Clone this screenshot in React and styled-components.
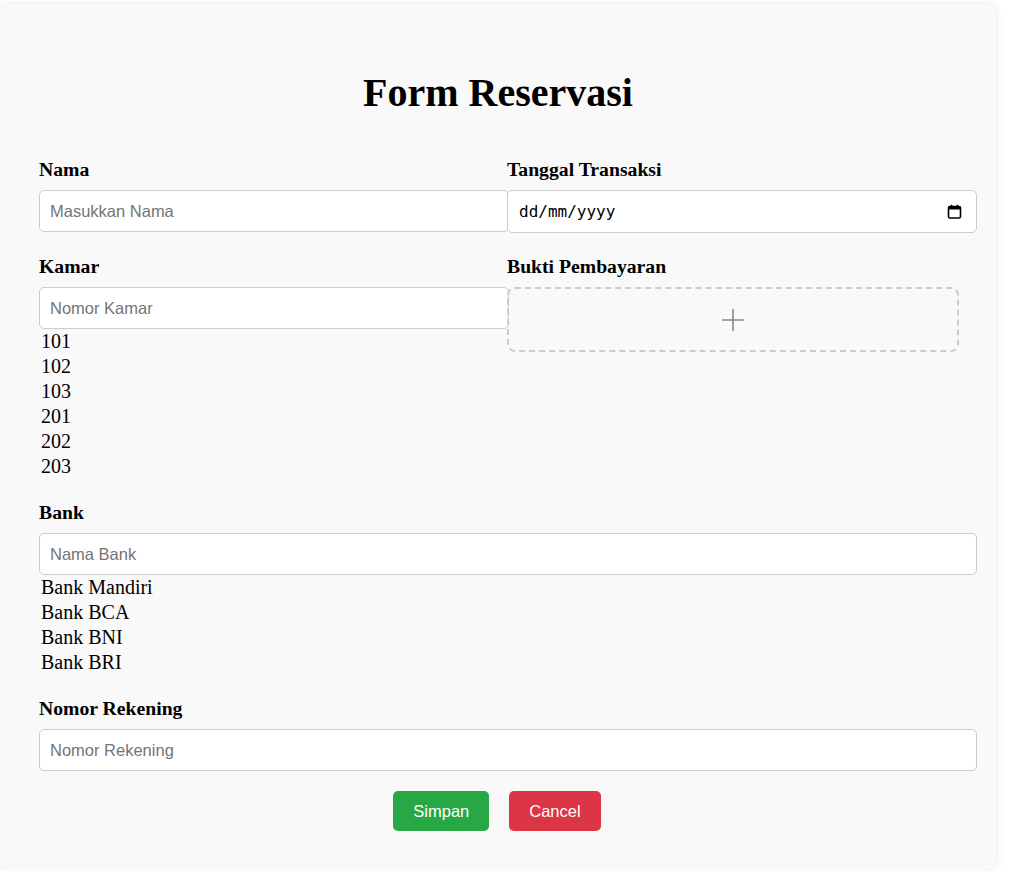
import React from "react";
import styled, { createGlobalStyle } from "styled-components";

const GlobalStyle = createGlobalStyle`
  body {
    margin: 0;
    background: #ffffff;
    font-family: "Liberation Serif", "Times New Roman", serif;
    color: #000;
  }
  * {
    box-sizing: border-box;
  }
`;

const Card = styled.div`
  width: 996px;
  margin-top: 4px;
  padding: 20px;
  background-color: #f9f9f9;
  border-radius: 10px;
  box-shadow: 0 0 10px rgba(0, 0, 0, 0.1);
`;

const Title = styled.h1`
  margin: 47px 0 43px;
  font-size: 40px;
  line-height: 44px;
  font-weight: bold;
  text-align: center;
`;

const Form = styled.form`
  width: 938px;
  margin-left: 19px;
  display: flex;
  flex-direction: column;
  gap: 22px;
`;

const TwoCols = styled.div`
  display: grid;
  grid-template-columns: 469px 469px;
  row-gap: 22px;
  align-items: start;
`;

const Group = styled.div`
  display: flex;
  flex-direction: column;
  margin-left: ${(p) => (p.$right ? "-1px" : "0")};
`;

const Label = styled.label`
  display: block;
  font-size: 19.7px;
  line-height: 22px;
  font-weight: bold;
  margin-bottom: 10px;
`;

const Input = styled.input`
  width: ${(p) => (p.$wide ? "100%" : "470px")};
  height: 42px;
  padding: 0 10px;
  border: 1px solid #ccc;
  border-radius: 5px;
  background: #fff;
  font-family: "Liberation Sans", Arial, sans-serif;
  font-size: 16.5px;
  color: #000;
  outline: none;

  &::placeholder {
    color: #757575;
  }
`;

const DateBox = styled.div`
  width: 470px;
  height: 43px;
  padding: 0 14px 0 11px;
  border: 1px solid #ccc;
  border-radius: 5px;
  background: #fff;
  display: flex;
  align-items: center;
`;

const DateText = styled.input`
  flex: 1;
  min-width: 0;
  border: none;
  outline: none;
  background: transparent;
  padding: 0;
  font-family: "DejaVu Sans Mono", monospace;
  font-size: 16px;
  color: #000;

  &::placeholder {
    color: #000;
  }
`;

const OptionList = styled.div`
  display: flex;
  flex-direction: column;
`;

const Option = styled.div`
  padding: 0 2px 1px;
  font-size: 20px;
  line-height: 24px;
  white-space: nowrap;
`;

const DropZone = styled.div`
  width: 452px;
  height: 65px;
  border: 2px dashed #ccc;
  border-radius: 8px;
  display: flex;
  align-items: center;
  justify-content: center;
  cursor: pointer;
`;

const Buttons = styled.div`
  display: flex;
  justify-content: center;
  gap: 20px;
  margin: 20px 0 20px -2px;
`;

const Button = styled.button`
  height: 40px;
  padding: 0 20px;
  border: none;
  border-radius: 5px;
  background-color: ${(p) => (p.$variant === "cancel" ? "#dc3545" : "#28a745")};
  color: #fff;
  font-family: "Liberation Sans", Arial, sans-serif;
  font-size: 16.5px;
  cursor: pointer;
`;

const PlusIcon = () => (
  <svg width="22" height="22" viewBox="0 0 22 22">
    <path d="M11 0 V22 M0 11 H22" stroke="#888" strokeWidth="1.6" fill="none" />
  </svg>
);

const CalendarIcon = () => (
  <svg width="15" height="15" viewBox="0 0 15 15">
    <rect x="1.5" y="2.5" width="12" height="11.5" rx="1.5" fill="none" stroke="#000" strokeWidth="1.6" />
    <rect x="1.5" y="2.5" width="12" height="3" fill="#000" />
    <path d="M4.5 0.8 V3 M10.5 0.8 V3" stroke="#000" strokeWidth="1.6" />
  </svg>
);

const rooms = ["101", "102", "103", "201", "202", "203"];
const banks = ["Bank Mandiri", "Bank BCA", "Bank BNI", "Bank BRI"];

export default function App() {
  return (
    <>
      <GlobalStyle />
      <Card>
        <Title>Form Reservasi</Title>
        <Form onSubmit={(e) => e.preventDefault()}>
          <TwoCols>
            <Group>
              <Label>Nama</Label>
              <Input type="text" placeholder="Masukkan Nama" />
            </Group>
            <Group $right>
              <Label>Tanggal Transaksi</Label>
              <DateBox>
                <DateText type="text" placeholder="dd/mm/yyyy" />
                <CalendarIcon />
              </DateBox>
            </Group>
            <Group>
              <Label>Kamar</Label>
              <Input type="text" placeholder="Nomor Kamar" />
              <OptionList>
                {rooms.map((r) => (
                  <Option key={r}>{r}</Option>
                ))}
              </OptionList>
            </Group>
            <Group $right>
              <Label>Bukti Pembayaran</Label>
              <DropZone>
                <PlusIcon />
              </DropZone>
            </Group>
          </TwoCols>
          <Group>
            <Label>Bank</Label>
            <Input type="text" placeholder="Nama Bank" $wide />
            <OptionList>
              {banks.map((b) => (
                <Option key={b}>{b}</Option>
              ))}
            </OptionList>
          </Group>
          <Group>
            <Label>Nomor Rekening</Label>
            <Input type="text" placeholder="Nomor Rekening" $wide />
          </Group>
        </Form>
        <Buttons>
          <Button type="button">Simpan</Button>
          <Button type="button" $variant="cancel">
            Cancel
          </Button>
        </Buttons>
      </Card>
    </>
  );
}
